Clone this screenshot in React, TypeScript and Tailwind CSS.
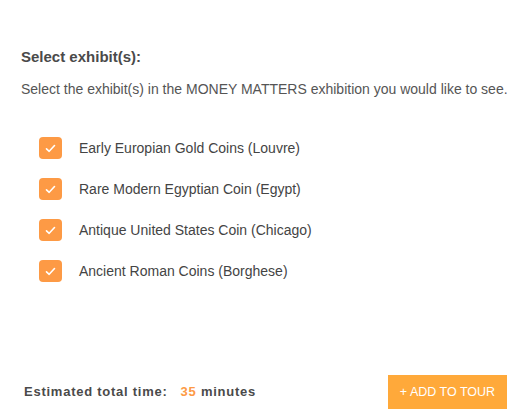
import React from 'react';

const exhibits = [
  'Early Europian Gold Coins (Louvre)',
  'Rare Modern Egyptian Coin (Egypt)',
  'Antique United States Coin (Chicago)',
  'Ancient Roman Coins (Borghese)',
];

function Check() {
  return (
    <span className="flex h-[22px] w-[23px] items-center justify-center rounded-[4px] bg-[#fd9a45]">
      <svg width="11" height="9" viewBox="0 0 11 9" fill="none">
        <path d="M1.5 4.8 L4.2 7.3 L9.5 1.5" stroke="white" strokeWidth="1.6" strokeLinecap="round" strokeLinejoin="round" />
      </svg>
    </span>
  );
}

export default function App() {
  return (
    <div className="flex h-[419px] w-[521px] flex-col bg-white font-['Liberation_Sans',Arial,sans-serif] text-[#444]">
      <div className="px-[21px] pt-[47px]">
        <h2 className="text-[15px] font-bold leading-[19px] text-[#4a4a4a]">Select exhibit(s):</h2>
        <p className="mt-[14px] whitespace-nowrap text-[14px] leading-[18px] text-[#555]">
          Select the exhibit(s) in the MONEY MATTERS exhibition you would like to see.
        </p>
      </div>

      <ul className="mt-[39px] flex flex-col gap-[19px] pl-[39px]">
        {exhibits.map((e) => (
          <li key={e} className="flex items-center gap-[17px]">
            <Check />
            <span className="text-[14px] text-[#444]">{e}</span>
          </li>
        ))}
      </ul>

      <div className="mt-auto flex items-center justify-between pb-[10px] pl-[24px] pr-[14px]">
        <div className="text-[13px] font-bold tracking-[0.75px] text-[#4a4a4a]">
          Estimated total time:
          <span className="ml-[13px] text-[#fd9a45]">35</span> minutes
        </div>
        <button className="h-[34px] w-[119px] bg-[#ffa93a] text-[12.5px] text-white">+ ADD TO TOUR</button>
      </div>
    </div>
  );
}
